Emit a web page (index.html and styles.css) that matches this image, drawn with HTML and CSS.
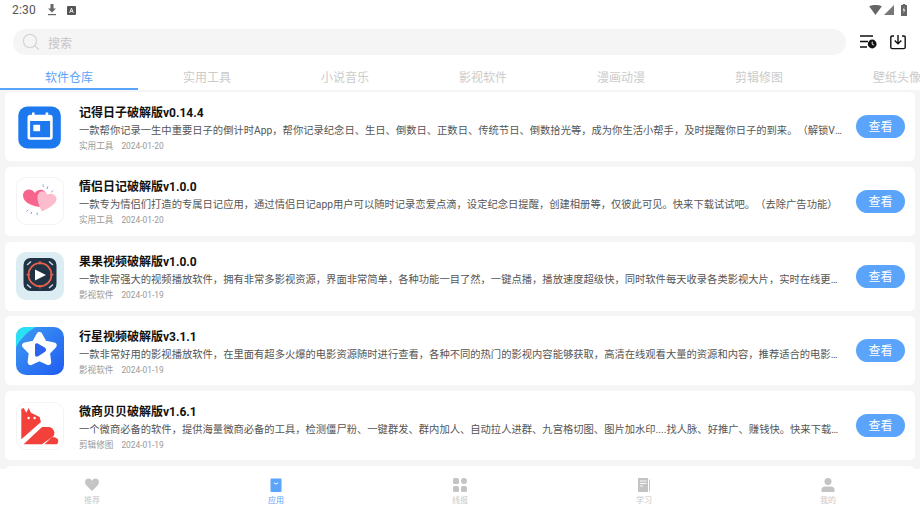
FILE: index.html
```html
<!DOCTYPE html>
<html lang="zh">
<head>
<meta charset="utf-8">
<title>软件仓库</title>
<link rel="stylesheet" href="styles.css">
</head>
<body>
<div class="page">
  <div class="status">
    <span class="time">2:30</span>
    <svg class="st-dl" viewBox="0 0 10 12"><path d="M3.500 0h3v4.500H9L5 8.600 1 4.500h2.500z" fill="#666"/><rect x="1" y="10" width="8" height="1.200" fill="#666"/></svg>
    <svg class="st-a" viewBox="0 0 10 10"><rect width="10" height="10" rx="1" fill="#555"/><path d="M3 7.600 5 2.400 7 7.600M3.800 6h2.400" stroke="#fff" fill="none" stroke-width="1"/></svg>
    <span class="spacer"></span>
    <svg class="st-wifi" viewBox="0 0 14 11"><path d="M0 1.500C4-.5 10-.5 14 1.500L7 11z" fill="#666"/></svg>
    <svg class="st-sig" viewBox="0 0 11 11"><path d="M11 0v11H0z" fill="#777"/></svg>
    <svg class="st-bat" viewBox="0 0 6 12"><path d="M1.800 0h2.400v1H6v11H0V1h1.800z" fill="#666"/><path d="M3.400 2.800 1.800 6.600h1.100l-.4 2.800 1.700-4H3z" fill="#fff"/></svg>
  </div>

  <div class="topbar">
    <div class="search">
      <svg class="search-ico" viewBox="0 0 18 18"><circle cx="8" cy="8" r="6.600" fill="none" stroke="#d6d6d6" stroke-width="1.300"/><path d="M12.800 12.800 16.800 16.800" stroke="#d6d6d6" stroke-width="1.300"/></svg>
      <span class="search-text">搜索</span>
    </div>
    <svg class="tool-a" viewBox="0 0 18 14"><path d="M1 1h13M1 6.500h8M1 12h7" stroke="#111" stroke-width="1.300" fill="none"/><circle cx="13.200" cy="9" r="4.400" fill="#111"/><path d="M13.200 6.600v2.600l1.900 1" stroke="#fff" stroke-width=".9" fill="none"/></svg>
    <svg class="tool-b" viewBox="0 0 16 15"><path d="M4 1H2.200Q.8 1 .8 2.400v9.800q0 1.400 1.400 1.400h11.600q1.400 0 1.400-1.400V2.400Q15.200 1 13.800 1H12" fill="none" stroke="#111" stroke-width="1.400"/><path d="M8 0v8.500M4.700 5.500 8 8.800l3.300-3.300" fill="none" stroke="#111" stroke-width="1.400"/></svg>
  </div>

  <div class="tabs">
    <div class="tab tab-on">软件仓库</div>
    <div class="tab">实用工具</div>
    <div class="tab">小说音乐</div>
    <div class="tab">影视软件</div>
    <div class="tab">漫画动漫</div>
    <div class="tab">剪辑修图</div>
    <div class="tab">壁纸头像</div>
  </div>

  <div class="list">
    <div class="card">
      <svg class="app" viewBox="0 0 48 48"><rect x="2.300" y="3.500" width="42.500" height="42" rx="9" fill="#1c78ee"/><rect x="12.800" y="13" width="22.600" height="22.500" rx="1.500" fill="none" stroke="#fff" stroke-width="2.600"/><rect x="12.800" y="13" width="22.600" height="5" fill="#fff"/><rect x="16" y="9.500" width="2.600" height="5" fill="#fff"/><rect x="29.600" y="9.500" width="2.600" height="5" fill="#fff"/><rect x="17.300" y="21.800" width="6.800" height="6.400" fill="#fff"/></svg>
      <div class="info">
        <div class="title">记得日子破解版v0.14.4</div>
        <div class="desc">一款帮你记录一生中重要日子的倒计时App，帮你记录纪念日、生日、倒数日、正数日、传统节日、倒数拾光等，成为你生活小帮手，及时提醒你日子的到来。（解锁VIP会员功能）</div>
        <div class="meta"><span>实用工具</span><span class="date">2024-01-20</span></div>
      </div>
      <div class="btn">查看</div>
    </div>

    <div class="card">
      <svg class="app" viewBox="0 0 48 48"><rect x=".5" y=".5" width="47" height="47" rx="10" fill="#fff" stroke="#f3f3f3"/><path d="M25.500 30 C18 30 7 26 7 18.500 7 12.500 15 10 19 16 22 11 30 12 30 18z" fill="#f7648e"/><path d="M25.700 34.500 C22.500 27 20.500 22 22 17.500 23.500 13 29.500 13 31.500 17.500 36 15 41 18.500 40.500 22.500 40 27.500 31 32 25.700 34.500z" fill="#fdbccd"/><path d="M27 7.500 27.300 10M31.800 9.500 31 12M37.200 13.500 35.200 15.300M10.500 34.500 12.300 32.800M15 37 15.800 34.800M21.300 38 21 35.500" stroke="#7da6e0" stroke-width="1" fill="none"/></svg>
      <div class="info">
        <div class="title">情侣日记破解版v1.0.0</div>
        <div class="desc">一款专为情侣们打造的专属日记应用，通过情侣日记app用户可以随时记录恋爱点滴，设定纪念日提醒，创建相册等，仅彼此可见。快来下载试试吧。（去除广告功能）</div>
        <div class="meta"><span>实用工具</span><span class="date">2024-01-20</span></div>
      </div>
      <div class="btn">查看</div>
    </div>

    <div class="card">
      <svg class="app" viewBox="0 0 48 48"><rect width="48" height="48" rx="10" fill="#dcecf3"/><rect x="7.500" y="6" width="33" height="33" rx="7" fill="#1f3344"/><circle cx="24" cy="22.700" r="11.500" fill="none" stroke="#e8604c" stroke-width="1.800"/><path d="M24 9v3.500M24 33v3.500M10.500 22.700h3.500M34 22.700h3.500" stroke="#e8604c" stroke-width="1.200"/><path d="M19 17.500 30 23 19 28.500z" fill="#fff"/><path d="M11 13l4-3.500M37 13l-4-3.500M11 32.500l4 3.500M37 32.500l-4 3.500" stroke="#c9d6df" stroke-width="1.500"/></svg>
      <div class="info">
        <div class="title">果果视频破解版v1.0.0</div>
        <div class="desc">一款非常强大的视频播放软件，拥有非常多影视资源，界面非常简单，各种功能一目了然，一键点播，播放速度超级快，同时软件每天收录各类影视大片，实时在线更新，让你随时观看</div>
        <div class="meta"><span>影视软件</span><span class="date">2024-01-19</span></div>
      </div>
      <div class="btn">查看</div>
    </div>

    <div class="card">
      <svg class="app" viewBox="0 0 48 48"><defs><linearGradient id="g1" x1="0" y1="0" x2="1" y2="1"><stop offset="0" stop-color="#3f9cf2"/><stop offset="1" stop-color="#1f5cf2"/></linearGradient></defs><rect width="48" height="48" rx="10" fill="url(#g1)"/><path d="M0 20V10Q0 0 10 0h10Q8 6 0 20z" fill="#2be0f5"/><path d="M23.400 8 28.100 16.500 37.700 18.400 31 25.500 32.200 35.100 23.400 31 14.600 35.100 15.800 25.500 9.100 18.400 18.700 16.500z" fill="#fff" stroke="#fff" stroke-width="6" stroke-linejoin="round"/><path d="M19 18.500c0-2 1.500-2.800 3.200-1.800l6.800 4c1.500 1 1.500 3 0 4l-6.800 4.500c-1.700 1-3.200.2-3.200-1.800z" fill="#2a63ee"/></svg>
      <div class="info">
        <div class="title">行星视频破解版v3.1.1</div>
        <div class="desc">一款非常好用的影视播放软件，在里面有超多火爆的电影资源随时进行查看，各种不同的热门的影视内容能够获取，高清在线观看大量的资源和内容，推荐适合的电影给你观看</div>
        <div class="meta"><span>影视软件</span><span class="date">2024-01-19</span></div>
      </div>
      <div class="btn">查看</div>
    </div>

    <div class="card">
      <svg class="app" viewBox="0 0 48 48"><rect x=".5" y=".5" width="47" height="47" rx="10" fill="#fff" stroke="#f3f3f3"/><path d="M5.300 7 7.600 6 10.300 10.700 12.600 6 15 10.700 23.600 15 25 20 5.300 37.300z" fill="#f4403a"/><path d="M7.600 42.300 26 25H33Q37 25.500 38.300 30 38.800 32.500 37.600 34L26 42.300z" fill="#f4403a"/><path d="M28.600 42.300 36 35Q40 35 42 37.300 43 40 41 42.300z" fill="#f4403a"/><circle cx="12.600" cy="16" r="1.200" fill="#fff"/><circle cx="18.600" cy="16" r="1.200" fill="#fff"/></svg>
      <div class="info">
        <div class="title">微商贝贝破解版v1.6.1</div>
        <div class="desc">一个微商必备的软件，提供海量微商必备的工具，检测僵尸粉、一键群发、群内加人、自动拉人进群、九宫格切图、图片加水印....找人脉、好推广、赚钱快。快来下载试试吧，微商必备工具</div>
        <div class="meta"><span>剪辑修图</span><span class="date">2024-01-19</span></div>
      </div>
      <div class="btn">查看</div>
    </div>

    <div class="card"></div>
  </div>

  <div class="nav">
    <div class="nav-item">
      <svg class="nav-ico" viewBox="0 0 14 14"><path d="M7 13 1 7C-.5 5-.3 2 1.800 1 3.800 0 5.800.8 7 2.800 8.200.8 10.200 0 12.200 1 14.300 2 14.500 5 13 7z" fill="#c4c4c4"/><path d="M7 5.500 5.800 4.300" stroke="#fff" stroke-width=".6"/></svg>
      <span class="nav-label">推荐</span>
    </div>
    <div class="nav-item nav-on">
      <svg class="nav-ico" viewBox="0 0 14 14"><path d="M2.500.5h9a1 1 0 0 1 1 1V13a1 1 0 0 1-1 1h-9a1 1 0 0 1-1-1V1.500a1 1 0 0 1 1-1z" fill="#5ba4fb"/><path d="M4.800 4.800Q7 7.300 9.200 4.800" stroke="#fff" stroke-width="1" fill="none"/></svg>
      <span class="nav-label">应用</span>
    </div>
    <div class="nav-item">
      <svg class="nav-ico" viewBox="0 0 14 14"><rect width="6" height="6" rx="1.500" fill="#c4c4c4"/><circle cx="11" cy="3" r="3" fill="#c4c4c4"/><rect y="8" width="6" height="6" rx="1.500" fill="#c4c4c4"/><rect x="8" y="8" width="6" height="6" rx="1.500" fill="#c4c4c4"/></svg>
      <span class="nav-label">线报</span>
    </div>
    <div class="nav-item">
      <svg class="nav-ico" viewBox="0 0 14 14"><path d="M1 0h10v14H1z" fill="#c4c4c4"/><path d="M12 1.500h1V13.500h-1z" fill="#c4c4c4"/><path d="M3 3h6.500M3 5.500h6.500M3 8h3" stroke="#fff" stroke-width=".9"/></svg>
      <span class="nav-label">学习</span>
    </div>
    <div class="nav-item">
      <svg class="nav-ico" viewBox="0 0 14 14"><circle cx="7" cy="3.500" r="3.500" fill="#c4c4c4"/><path d="M.5 14v-2.500C.5 9.500 2.500 8.500 4 8.500h6c1.500 0 3.500 1 3.500 3V14z" fill="#c4c4c4"/></svg>
      <span class="nav-label">我的</span>
    </div>
  </div>
</div>
</body>
</html>
```
FILE: styles.css
```css
* { box-sizing: border-box; }
html, body { margin: 0; padding: 0; height: 100%; }
body {
  background: #fff;
  font-family: Roboto, "Noto Sans CJK SC", sans-serif;
  overflow: hidden;
  text-spacing-trim: space-all;
}
.page {
  width: 920px;
  height: 517px;
  display: flex;
  flex-direction: column;
  overflow: hidden;
}
.status {
  height: 29px;
  flex: none;
  display: flex;
  align-items: center;
  padding: 0 13px 9px 12px;
}
.time { font-size: 12px; color: #555; width: 34px; letter-spacing: .2px; }
.st-dl { width: 10px; height: 12px; margin-left: 1px; }
.st-a { width: 9px; height: 9px; margin-left: 10px; }
.spacer { flex: 1; }
.st-wifi { width: 13px; height: 10px; }
.st-sig { width: 10px; height: 10px; margin-left: 2px; }
.st-bat { width: 6px; height: 12px; margin-left: 7px; }

.topbar {
  height: 26px;
  flex: none;
  display: flex;
  align-items: center;
  padding: 0 14px 0 13px;
}
.search {
  width: 833px;
  height: 26px;
  background: #f5f5f5;
  border-radius: 13px;
  display: flex;
  align-items: center;
  padding-left: 9px;
}
.search-ico { width: 18px; height: 18px; }
.search-text { margin-left: 8px; font-size: 12px; color: #c6c6c6; }
.tool-a { width: 18px; height: 14px; margin-left: 13px; }
.tool-b { width: 16px; height: 15px; margin-left: 13px; }

.tabs {
  height: 35px;
  flex: none;
  display: flex;
  overflow: hidden;
  padding-top: 11px;
}
.tab {
  flex: 0 0 138px;
  height: 24px;
  font-size: 12px;
  line-height: 25px;
  text-align: center;
  color: #cbcbcb;
}
.tab-on {
  color: #5ba4fb;
  border-bottom: 2px solid #5ba4fb;
}

.list {
  flex: 1;
  min-height: 0;
  background: #f5f5f5;
  padding: 2px 5px 0;
  display: flex;
  flex-direction: column;
  gap: 5.75px;
  overflow: hidden;
}
.card {
  flex: none;
  height: 69px;
  background: #fff;
  border-radius: 5px;
  display: flex;
  align-items: center;
  padding: 0 10px 0 11px;
}
.app { width: 48px; height: 48px; flex: none; }
.info {
  flex: 1;
  min-width: 0;
  margin: 0 12px 0 15px;
  padding-top: 4px;
  display: flex;
  flex-direction: column;
}
.title {
  font-size: 12px;
  line-height: 15px;
  font-weight: 700;
  color: #111;
}
.desc {
  margin-top: 2px;
  font-size: 10.3px;
  line-height: 15px;
  color: #555;
  white-space: nowrap;
  overflow: hidden;
  text-overflow: ellipsis;
}
.meta {
  margin-top: 2px;
  font-size: 8.6px;
  line-height: 12px;
  color: #999;
  display: flex;
  gap: 8px;
}
.date { font-size: 8.4px; }
.btn {
  flex: none;
  width: 49px;
  height: 23px;
  padding-top: 2px;
  border-radius: 12px;
  background: #5ba4fb;
  color: #fff;
  font-size: 12px;
  line-height: 21px;
  text-align: center;
}

.nav {
  flex: none;
  height: 48px;
  background: #fff;
  display: flex;
}
.nav-item {
  flex: 1;
  display: flex;
  flex-direction: column;
  align-items: center;
  padding-top: 9px;
}
.nav-ico { width: 14px; height: 14px; }
.nav-label {
  margin-top: 3px;
  font-size: 8px;
  line-height: 11px;
  color: #c8c8c8;
}
.nav-on .nav-label { color: #5ba4fb; }
```
